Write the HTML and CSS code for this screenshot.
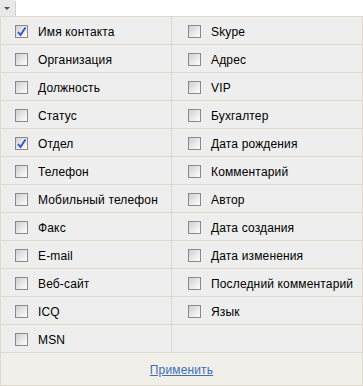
FILE: index.html
```html
<!DOCTYPE html>
<html lang="ru">
<head>
    <meta charset="UTF-8">
    <title>Колонки</title>
    <link rel="stylesheet" href="styles.css">
</head>
<body>
    <div class="toggle"><span class="arrow"></span></div>

    <div class="panel">
        <div class="columns">
            <div class="col col-left">
                <label class="item"><span class="box checked"><svg viewBox="0 0 11 11"><path d="M2 6 L4.5 9 L9.5 1.5" /></svg></span>Имя контакта</label>
                <label class="item"><span class="box"></span>Организация</label>
                <label class="item"><span class="box"></span>Должность</label>
                <label class="item"><span class="box"></span>Статус</label>
                <label class="item"><span class="box checked"><svg viewBox="0 0 11 11"><path d="M2 6 L4.5 9 L9.5 1.5" /></svg></span>Отдел</label>
                <label class="item"><span class="box"></span>Телефон</label>
                <label class="item"><span class="box"></span>Мобильный телефон</label>
                <label class="item"><span class="box"></span>Факс</label>
                <label class="item"><span class="box"></span>E-mail</label>
                <label class="item"><span class="box"></span>Веб-сайт</label>
                <label class="item"><span class="box"></span>ICQ</label>
                <label class="item"><span class="box"></span>MSN</label>
            </div>
            <div class="col col-right">
                <label class="item"><span class="box"></span>Skype</label>
                <label class="item"><span class="box"></span>Адрес</label>
                <label class="item"><span class="box"></span>VIP</label>
                <label class="item"><span class="box"></span>Бухгалтер</label>
                <label class="item"><span class="box"></span>Дата рождения</label>
                <label class="item"><span class="box"></span>Комментарий</label>
                <label class="item"><span class="box"></span>Автор</label>
                <label class="item"><span class="box"></span>Дата создания</label>
                <label class="item"><span class="box"></span>Дата изменения</label>
                <label class="item"><span class="box"></span>Последний комментарий</label>
                <label class="item"><span class="box"></span>Язык</label>
                <div class="item empty"></div>
            </div>
        </div>
        <div class="footer">
            <a href="#" class="apply">Применить</a>
        </div>
    </div>
</body>
</html>
```

FILE: styles.css
```css
body {
    margin: 0;
    background: #fff;
    font-family: "Liberation Sans", Arial, sans-serif;
    font-size: 12px;
    letter-spacing: 0.15px;
    color: #000;
}
.toggle {
    width: 15px;
    height: 16px;
    background: #e9e9e9;
    box-shadow: 1px 1px 0 #d0d0d0;
    display: flex;
    justify-content: center;
    align-items: center;
}
.arrow {
    width: 0;
    height: 0;
    border-left: 3px solid transparent;
    border-right: 3px solid transparent;
    border-top: 3px solid #555;
    margin-left: -1px;
}
.panel {
    width: 361px;
    border: 1px solid #ddd9cb;
}
.columns {
    display: flex;
}
.col-left {
    width: 170px;
    border-right: 1px solid #ddd9cb;
}
.col-right {
    width: 190px;
}
.item {
    display: flex;
    align-items: center;
    height: 25px;
    padding-top: 2px;
    background: #eeeeee;
    border-bottom: 1px solid #ddd9cb;
    white-space: nowrap;
}
.col-left .item {
    padding-left: 14px;
}
.col-right .item {
    padding-left: 16px;
}
.box {
    width: 11px;
    height: 11px;
    border: 1px solid #8a8a8a;
    background: linear-gradient(135deg, #cfcfcf 0%, #ececec 60%, #fff 100%);
    margin-right: 10px;
    flex: none;
    display: flex;
}
.box svg {
    width: 11px;
    height: 11px;
}
.box svg path {
    fill: none;
    stroke: #2c4fc4;
    stroke-width: 1.8;
}
.footer {
    height: 32px;
    background: #f1efea;
    display: flex;
    justify-content: center;
    align-items: center;
}
.apply {
    color: #3e6eb5;
    text-decoration: underline;
    padding-top: 2px;
}
```
